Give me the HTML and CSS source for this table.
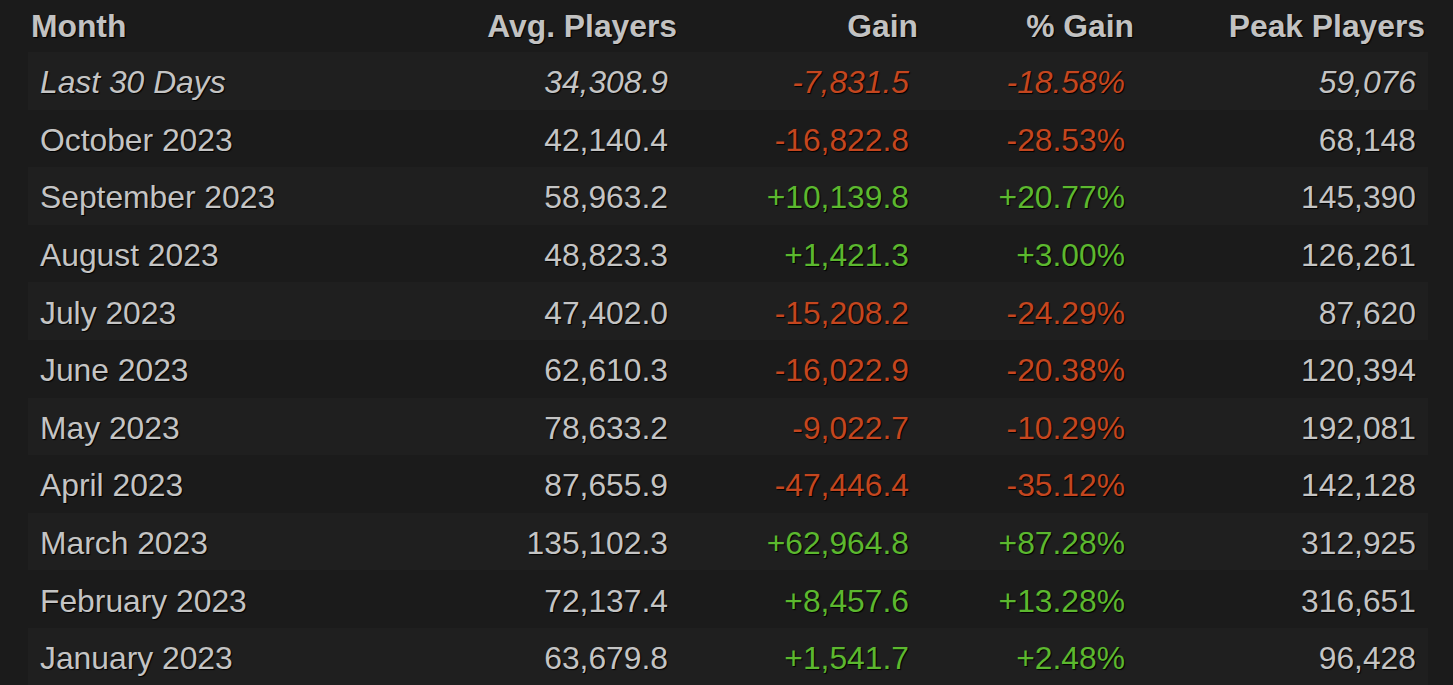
FILE: index.html
```html
<!DOCTYPE html>
<html>
<head>
<meta charset="utf-8">
<link rel="stylesheet" href="styles.css">
</head>
<body>
<table class="stats">
  <colgroup>
    <col class="c-month"><col class="c-avg"><col class="c-gain"><col class="c-pct"><col class="c-peak">
  </colgroup>
  <thead>
    <tr>
      <th class="left">Month</th>
      <th>Avg. Players</th>
      <th>Gain</th>
      <th>% Gain</th>
      <th>Peak Players</th>
    </tr>
  </thead>
  <tbody>
    <tr class="odd current">
      <td class="left">Last 30 Days</td><td>34,308.9</td><td class="loss">-7,831.5</td><td class="loss">-18.58%</td><td>59,076</td>
    </tr>
    <tr>
      <td class="left">October 2023</td><td>42,140.4</td><td class="loss">-16,822.8</td><td class="loss">-28.53%</td><td>68,148</td>
    </tr>
    <tr class="odd">
      <td class="left">September 2023</td><td>58,963.2</td><td class="win">+10,139.8</td><td class="win">+20.77%</td><td>145,390</td>
    </tr>
    <tr>
      <td class="left">August 2023</td><td>48,823.3</td><td class="win">+1,421.3</td><td class="win">+3.00%</td><td>126,261</td>
    </tr>
    <tr class="odd">
      <td class="left">July 2023</td><td>47,402.0</td><td class="loss">-15,208.2</td><td class="loss">-24.29%</td><td>87,620</td>
    </tr>
    <tr>
      <td class="left">June 2023</td><td>62,610.3</td><td class="loss">-16,022.9</td><td class="loss">-20.38%</td><td>120,394</td>
    </tr>
    <tr class="odd">
      <td class="left">May 2023</td><td>78,633.2</td><td class="loss">-9,022.7</td><td class="loss">-10.29%</td><td>192,081</td>
    </tr>
    <tr>
      <td class="left">April 2023</td><td>87,655.9</td><td class="loss">-47,446.4</td><td class="loss">-35.12%</td><td>142,128</td>
    </tr>
    <tr class="odd">
      <td class="left">March 2023</td><td>135,102.3</td><td class="win">+62,964.8</td><td class="win">+87.28%</td><td>312,925</td>
    </tr>
    <tr>
      <td class="left">February 2023</td><td>72,137.4</td><td class="win">+8,457.6</td><td class="win">+13.28%</td><td>316,651</td>
    </tr>
    <tr class="odd">
      <td class="left">January 2023</td><td>63,679.8</td><td class="win">+1,541.7</td><td class="win">+2.48%</td><td>96,428</td>
    </tr>
  </tbody>
</table>
</body>
</html>
```

FILE: styles.css
```css
html, body {
  background: #1b1b1b;
}
body {
  margin: 0 25px 0 28px;
  overflow: hidden;
  font-family: "Liberation Sans", Arial, sans-serif;
  color: #c4c4c4;
}
.stats {
  width: 1400px;
  border-collapse: collapse;
  table-layout: fixed;
  font-size: 31.8px;
  text-shadow: 1px 1px 1px #000;
}
.c-month { width: 372px; }
.c-avg { width: 280px; }
.c-gain { width: 241px; }
.c-pct { width: 216px; }
.c-peak { width: 291px; }

.stats th {
  height: 52px;
  box-sizing: border-box;
  padding: 1px 3px 0 3px;
  font-weight: bold;
  text-align: right;
  vertical-align: middle;
  color: #c2c2c2;
  white-space: nowrap;
}
.stats td {
  height: 57.6px;
  box-sizing: border-box;
  padding: 4px 12px 0 12px;
  text-align: right;
  vertical-align: middle;
  white-space: nowrap;
}
.stats th.left { text-align: left; }
.stats td.left { text-align: left; }
.stats tr.odd td { background: #1f1f1f; }
.stats tr.current td { font-style: italic; }
.stats td.loss { color: #c4461f; }
.stats td.win { color: #5cb82f; }
```
